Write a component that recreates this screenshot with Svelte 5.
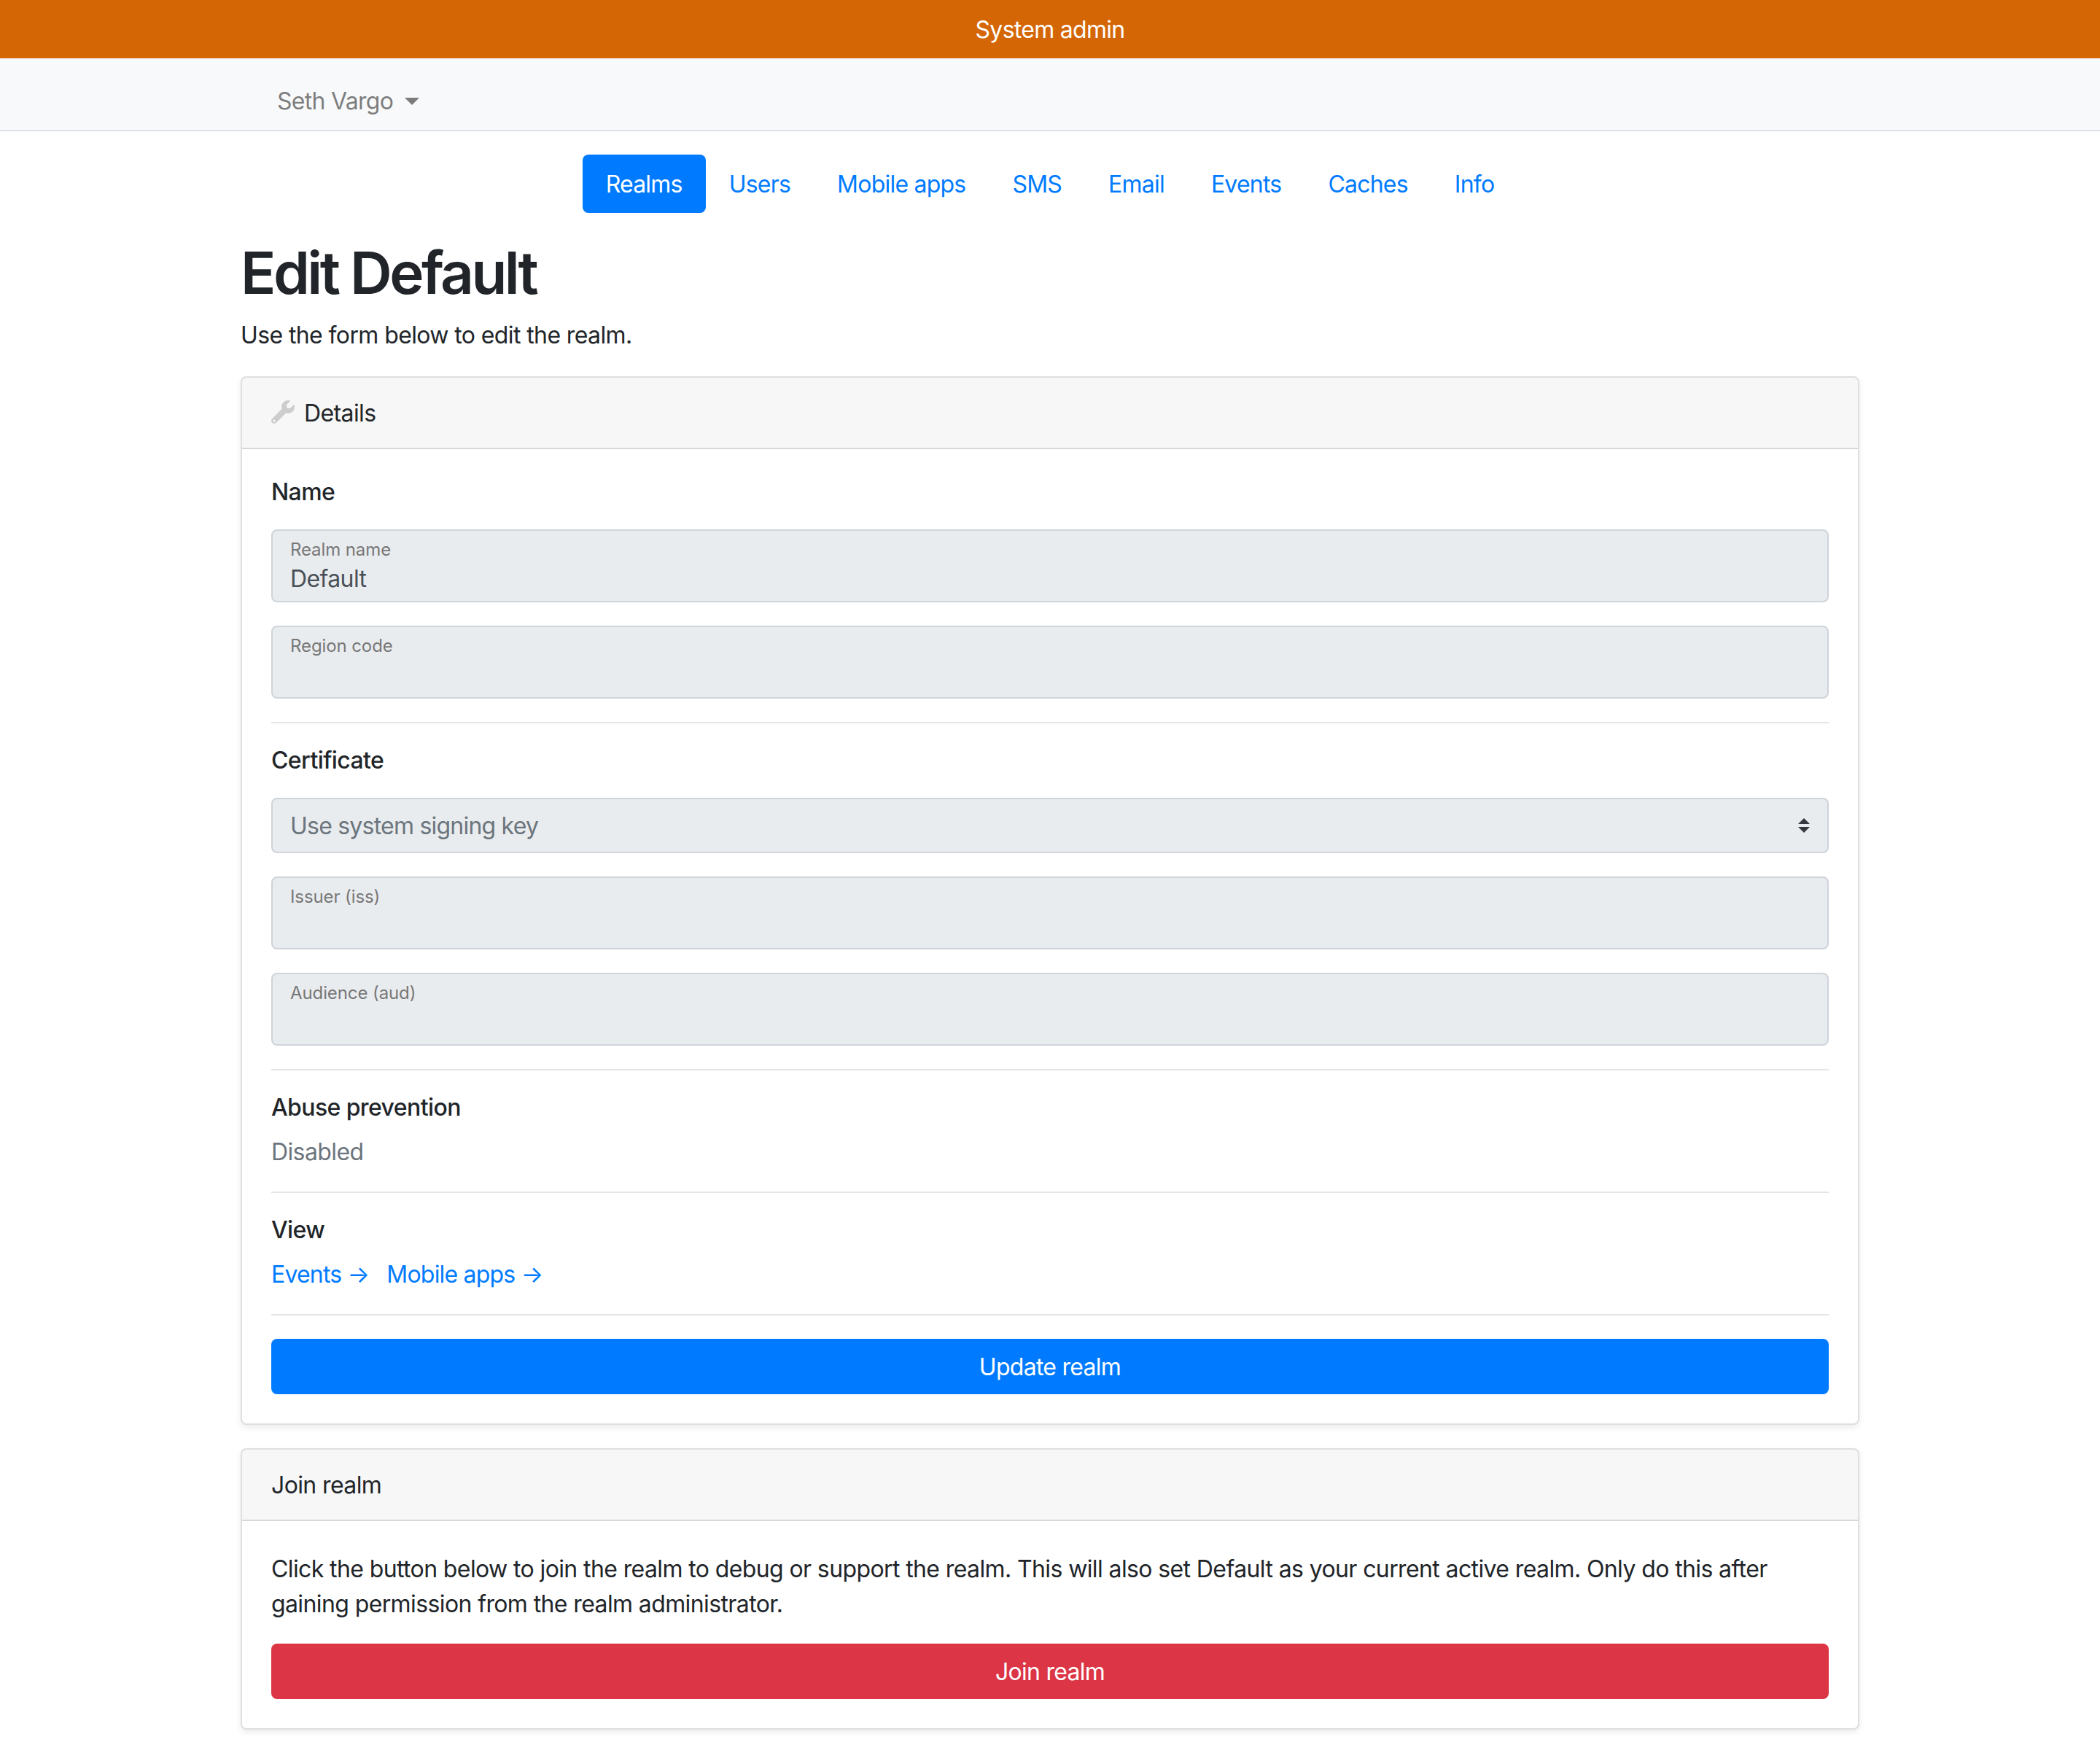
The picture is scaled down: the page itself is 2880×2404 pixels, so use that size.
<script>
  const tabs = ['Realms', 'Users', 'Mobile apps', 'SMS', 'Email', 'Events', 'Caches', 'Info'];
</script>

<div class="banner">System admin</div>

<nav class="navbar">
  <span class="user">Seth Vargo<i class="caret"></i></span>
</nav>

<main class="container">
  <ul class="pills">
    {#each tabs as tab, i}
      <li><a href="#top" class:active={i === 0}>{tab}</a></li>
    {/each}
  </ul>

  <h1>Edit Default</h1>
  <p class="lead">Use the form below to edit the realm.</p>

  <section class="card">
    <header class="card-header">
      <svg class="wrench" viewBox="0 0 512 512" aria-hidden="true">
        <path d="M507.73 109.1c-2.24-9.03-13.54-12.09-20.12-5.51l-74.36 74.36-67.88-11.31-11.31-67.88 74.36-74.36c6.62-6.62 3.43-17.9-5.66-20.16-47.38-11.74-99.55.91-136.58 37.93-39.64 39.64-50.55 97.1-34.05 147.2L18.74 402.76c-24.99 24.99-24.99 65.51 0 90.5 24.99 24.99 65.51 24.99 90.5 0l213.21-213.21c50.12 16.71 107.47 5.68 147.37-34.22 37.07-37.07 49.7-89.32 37.91-136.73zM64 472c-13.25 0-24-10.75-24-24 0-13.26 10.75-24 24-24s24 10.74 24 24c0 13.25-10.75 24-24 24z"/>
      </svg>
      Details
    </header>
    <div class="card-body">
      <h6>Name</h6>
      <div class="field">
        <input id="name" value="Default" disabled />
        <label for="name">Realm name</label>
      </div>
      <div class="field">
        <input id="region" disabled />
        <label for="region">Region code</label>
      </div>

      <hr />

      <h6>Certificate</h6>
      <select class="select" disabled>
        <option>Use system signing key</option>
      </select>
      <div class="field">
        <input id="iss" disabled />
        <label for="iss">Issuer (iss)</label>
      </div>
      <div class="field">
        <input id="aud" disabled />
        <label for="aud">Audience (aud)</label>
      </div>

      <hr />

      <h6>Abuse prevention</h6>
      <p class="muted">Disabled</p>

      <hr />

      <h6>View</h6>
      <p class="links">
        <a href="#top">Events →</a>
        <a href="#top">Mobile apps →</a>
      </p>

      <hr />

      <button class="btn primary" type="button">Update realm</button>
    </div>
  </section>

  <section class="card">
    <header class="card-header">Join realm</header>
    <div class="card-body">
      <p class="copy">Click the button below to join the realm to debug or support the realm. This will also set Default as your current active realm. Only do this after gaining permission from the realm administrator.</p>
      <button class="btn danger" type="button">Join realm</button>
    </div>
  </section>
</main>

<style>
  :global(body) {
    margin: 0;
    background: #fff;
    color: #212529;
    font-family: Inter, "Liberation Sans", sans-serif;
    font-size: 32px;
    line-height: 48px;
    letter-spacing: -0.61px;
  }

  .banner {
    height: 80px;
    padding-top: 9px;
    box-sizing: border-box;
    background: #d56605;
    color: #fff;
    text-align: center;
    line-height: 64px;
    letter-spacing: -0.72px;
  }

  .navbar {
    height: 100px;
    box-sizing: border-box;
    padding: 20px 380px 0;
    display: flex;
    align-items: center;
    background: #f8f9fa;
    border-bottom: 2px solid #dee2e6;
    color: rgba(0, 0, 0, 0.5);
    letter-spacing: -0.72px;
  }

  .caret {
    display: inline-block;
    margin-left: 16px;
    vertical-align: 6px;
    border-top: 10px solid;
    border-left: 10px solid transparent;
    border-right: 10px solid transparent;
  }

  .container {
    width: 2220px;
    margin: 0 auto;
    padding: 32px 0;
  }

  .pills {
    display: flex;
    justify-content: center;
    list-style: none;
    margin: 0 0 32px;
    padding: 0;
    letter-spacing: -0.78px;
  }

  .pills a {
    display: block;
    padding: 17px 32px 15px;
    border-radius: 8px;
    color: #007bff;
    text-decoration: none;
  }

  .pills a.active {
    background: #007bff;
    color: #fff;
  }

  h1 {
    margin: 0 0 14px;
    padding-top: 2px;
    font-size: 80px;
    font-weight: 600;
    line-height: 96px;
    letter-spacing: -3.55px;
  }

  .lead {
    margin: 0 0 32px;
  }

  .card {
    margin-bottom: 32px;
    background: #fff;
    border: 2px solid rgba(0, 0, 0, 0.125);
    border-radius: 8px;
    box-shadow: 0 4px 8px rgba(0, 0, 0, 0.075);
  }

  .card-header {
    padding: 25px 40px 23px;
    background: rgba(0, 0, 0, 0.03);
    border-bottom: 2px solid rgba(0, 0, 0, 0.125);
    border-radius: 6px 6px 0 0;
    display: flex;
    align-items: center;
  }

  .wrench {
    width: 32px;
    height: 32px;
    margin: 0 13px 4px 0;
    fill: rgba(0, 0, 0, 0.17);
  }

  .card-body {
    padding: 40px;
  }

  h6 {
    margin: 0 0 32px;
    font-size: 32px;
    font-weight: 500;
    line-height: 38px;
    letter-spacing: -0.6px;
  }

  hr {
    margin: 32px 0;
    border: 0;
    border-top: 2px solid rgba(0, 0, 0, 0.1);
  }

  .field {
    position: relative;
    margin-bottom: 32px;
  }

  .field input {
    display: block;
    width: 100%;
    height: 100px;
    box-sizing: border-box;
    padding: 35px 24px 0;
    background: #e9ecef;
    border: 2px solid #ced4da;
    border-radius: 8px;
    color: #495057;
    font: inherit;
    letter-spacing: inherit;
    opacity: 1;
  }

  .field label {
    position: absolute;
    top: 10px;
    left: 26px;
    font-size: 24px;
    line-height: 36px;
    color: #777;
    letter-spacing: -0.1px;
  }

  .select {
    display: block;
    width: 100%;
    height: 76px;
    box-sizing: border-box;
    margin-bottom: 32px;
    padding: 2px 24px 0;
    appearance: none;
    background: #e9ecef url("data:image/svg+xml,%3csvg xmlns='http://www.w3.org/2000/svg' width='4' height='5' viewBox='0 0 4 5'%3e%3cpath fill='%23343a40' d='M2 0L0 2h4zm0 5L0 3h4z'/%3e%3c/svg%3e") no-repeat right 24px center / 16px 20px;
    border: 2px solid #ced4da;
    border-radius: 8px;
    color: #6c757d;
    font: inherit;
    letter-spacing: -0.78px;
    opacity: 1;
  }

  .muted {
    margin: -14px 0 -2px;
    color: #6c757d;
  }

  .links {
    margin: -14px 0 -2px;
    display: flex;
    gap: 24px;
    letter-spacing: -0.8px;
  }

  .links a {
    color: #007bff;
    text-decoration: none;
  }

  .btn {
    display: block;
    width: 100%;
    height: 76px;
    padding: 2px 0 0;
    border: 2px solid transparent;
    border-radius: 8px;
    color: #fff;
    font: inherit;
    letter-spacing: -0.72px;
  }

  .primary {
    background: #007bff;
  }

  .danger {
    background: #dc3545;
  }

  .copy {
    margin: 0 0 30px;
    padding-top: 2px;
  }
</style>
